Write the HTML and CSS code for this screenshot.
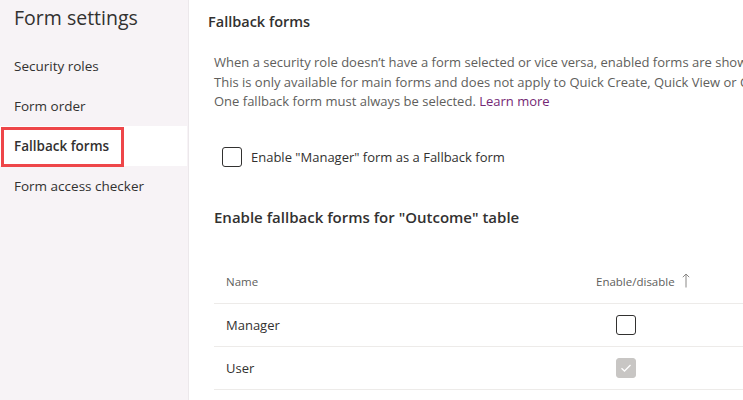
FILE: index.html
```html
<!DOCTYPE html>
<html>
<head>
<meta charset="utf-8">
<link rel="stylesheet" href="styles.css">
</head>
<body>
<div class="app">
  <aside class="sidebar">
    <h1 class="side-title">Form settings</h1>
    <nav class="nav">
      <div class="nav-item">Security roles</div>
      <div class="nav-item">Form order</div>
      <div class="nav-item active"><span class="highlight"></span>Fallback forms</div>
      <div class="nav-item">Form access checker</div>
    </nav>
  </aside>
  <main class="main">
    <h2 class="page-title">Fallback forms</h2>
    <p class="desc">When a security role doesn’t have a form selected or vice versa, enabled forms are shown to users.<br>This is only available for main forms and does not apply to Quick Create, Quick View or Card forms.<br>One fallback form must always be selected. <a class="link">Learn more</a></p>
    <label class="check-row"><span class="box"></span><span>Enable "Manager" form as a Fallback form</span></label>
    <h3 class="section-title">Enable fallback forms for "Outcome" table</h3>
    <div class="table">
      <div class="row head">
        <div class="cell name">Name</div>
        <div class="cell toggle">Enable/disable <svg class="arrow" width="8" height="15" viewBox="0 0 8 15"><path d="M4 14.5 V1 M0.8 4.2 L4 1 L7.2 4.2" fill="none" stroke="#8a8886" stroke-width="1"/></svg></div>
      </div>
      <div class="row">
        <div class="cell name">Manager</div>
        <div class="cell toggle"><span class="box"></span></div>
      </div>
      <div class="row">
        <div class="cell name">User</div>
        <div class="cell toggle"><span class="box checked"><svg width="12" height="10" viewBox="0 0 12 10"><path d="M1.5 5.2 L4.5 8 L10.5 2" fill="none" stroke="#ffffff" stroke-width="1.3"/></svg></span></div>
      </div>
    </div>
  </main>
</div>
</body>
</html>
```
FILE: styles.css
```css
* { box-sizing: border-box; }
html, body { margin: 0; padding: 0; }
body {
  font-family: "Segoe UI", "Open Sans", "Noto Sans", sans-serif;
  color: #323130;
  background: #ffffff;
  width: 743px;
  height: 400px;
  overflow: hidden;
}
.app { display: flex; height: 400px; }
.sidebar {
  width: 189px;
  flex: none;
  background: #f7f3f6;
  border-right: 1px solid #ece8eb;
}
.side-title {
  margin: 0;
  padding: 4px 0 0 14px;
  height: 46px;
  font-size: 19.5px;
  font-weight: 400;
  line-height: 28px;
  color: #323130;
}
.nav { display: flex; flex-direction: column; }
.nav-item {
  position: relative;
  height: 40px;
  line-height: 40px;
  padding-left: 14px;
  font-size: 13.5px;
  color: #323130;
}
.nav-item.active { background: #ffffff; font-weight: 600; margin-right: 1px; }
.highlight {
  position: absolute;
  left: 1px;
  top: 1px;
  width: 123px;
  height: 40px;
  border: 3px solid #ee4649;
}
.main { flex: 1; padding: 0 0 0 19px; min-width: 0; white-space: nowrap; overflow: hidden; }
.page-title {
  margin: 0;
  padding-top: 11px;
  font-size: 14.5px;
  font-weight: 600;
  line-height: 22px;
}
.desc {
  margin: 20px 0 0 6px;
  font-size: 13px;
  line-height: 19.5px;
  color: #605e5c;
}
.link { color: #742774; }
.check-row {
  display: flex;
  align-items: center;
  gap: 9px;
  margin: 35px 0 0 14px;
  font-size: 13px;
  line-height: 20px;
}
.box {
  display: inline-flex;
  align-items: center;
  justify-content: center;
  width: 20px;
  height: 20px;
  border: 1px solid #323130;
  border-radius: 3px;
  flex: none;
}
.box.checked { background: #c8c6c4; border-color: #c8c6c4; }
.section-title {
  margin: 39px 0 0 6px;
  font-size: 15px;
  font-weight: 600;
  line-height: 22px;
}
.table { margin: 33px 0 0 6px; }
.row {
  display: flex;
  height: 43px;
  align-items: center;
  border-bottom: 1px solid #edebe9;
}
.cell.name { width: 382px; padding-left: 12px; font-size: 13px; }
.head .cell { font-size: 11.5px; color: #605e5c; line-height: 20px; }
.cell.toggle { display: flex; align-items: center; }
.row:not(.head) .cell.toggle { padding-left: 20px; }
.arrow { margin-left: 7px; margin-top: -2px; }
```
